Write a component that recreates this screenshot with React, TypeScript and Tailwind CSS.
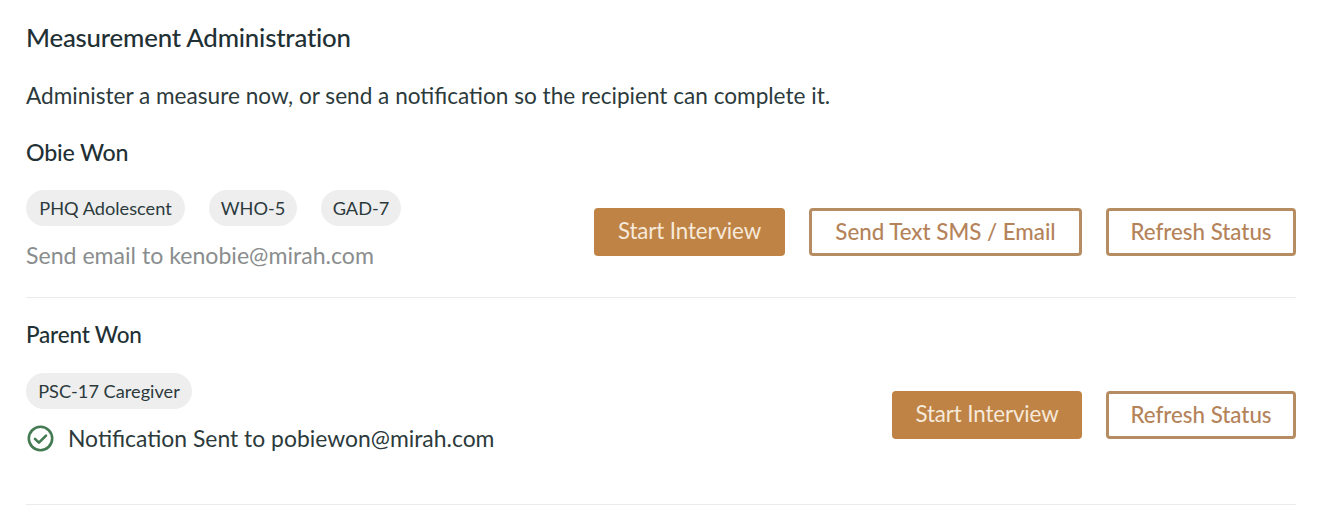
import React from "react";

const font = "font-['Lato',sans-serif]";

function Chip({ label, w }: { label: string; w: string }) {
  return (
    <span className={`flex h-[36px] items-center justify-center rounded-full bg-[#eeeeef] pt-[1px] text-[18.2px] text-[#2c3a3c] ${w}`}>
      {label}
    </span>
  );
}

function Filled({ label, w }: { label: string; w: string }) {
  return (
    <button className={`flex h-[48px] items-center justify-center rounded-[4px] bg-[#bf8345] pb-[2px] text-[22.3px] tracking-[-0.1px] text-[#f6e9da] ${w}`}>
      {label}
    </button>
  );
}

function Outline({ label, w }: { label: string; w: string }) {
  return (
    <button className={`flex h-[48px] items-center justify-center rounded-[4px] border-[3px] border-[#b68d62] bg-white pb-[1px] text-[22.3px] font-medium text-[#b5835a] ${w}`}>
      {label}
    </button>
  );
}

export default function App() {
  return (
    <div className={`h-[514px] w-[1324px] overflow-hidden bg-white pl-[26px] pr-[28px] pt-[20px] text-[#1f3135] ${font}`}>
      <h2 className="text-[25.8px] font-medium leading-[34px] tracking-[-0.2px] text-[#1f3135]">Measurement Administration</h2>
      <p className="mt-[27px] text-[22.6px] leading-[30px] text-[#2c3a3c]">
        Administer a measure now, or send a notification so the recipient can complete it.
      </p>

      <section className="mt-[25px] h-[162px] border-b border-[#ebebeb]">
        <h3 className="text-[23.2px] font-medium leading-[32px] tracking-[-0.2px]">Obie Won</h3>
        <div className="mt-[22px] flex items-center justify-between">
          <div>
            <div className="flex gap-[24px]">
              <Chip label="PHQ Adolescent" w="w-[159px]" />
              <Chip label="WHO-5" w="w-[88px]" />
              <Chip label="GAD-7" w="w-[80px]" />
            </div>
            <div className="mt-[14px] text-[23.1px] leading-[30px] text-[#8a8d8e]">Send email to kenobie@mirah.com</div>
          </div>
          <div className="mt-[4px] flex gap-[24px]">
            <Filled label="Start Interview" w="w-[191px]" />
            <Outline label="Send Text SMS / Email" w="w-[273px]" />
            <Outline label="Refresh Status" w="w-[190px]" />
          </div>
        </div>
      </section>

      <section className="h-[207px] border-b border-[#ebebeb] pt-[21px]">
        <h3 className="text-[22.5px] font-medium leading-[32px] tracking-[-0.2px]">Parent Won</h3>
        <div className="mt-[22px] flex items-center justify-between">
          <div>
            <div className="flex">
              <Chip label="PSC-17 Caregiver" w="w-[166px]" />
            </div>
            <div className="mt-[14px] flex items-center gap-[14px] pl-[1px] text-[22.9px] leading-[30px] text-[#2c3a3c]">
              <svg width="27" height="27" viewBox="0 0 27 27" fill="none" stroke="#437a52" strokeWidth="2.6" strokeLinecap="round" strokeLinejoin="round">
                <circle cx="13.5" cy="13.5" r="11.7" />
                <path d="M8 13.8l3.9 3.9 7.1-7.1" />
              </svg>
              <span>Notification Sent to pobiewon@mirah.com</span>
            </div>
          </div>
          <div className="mt-[4px] flex gap-[24px]">
            <Filled label="Start Interview" w="w-[190px]" />
            <Outline label="Refresh Status" w="w-[190px]" />
          </div>
        </div>
      </section>
    </div>
  );
}
